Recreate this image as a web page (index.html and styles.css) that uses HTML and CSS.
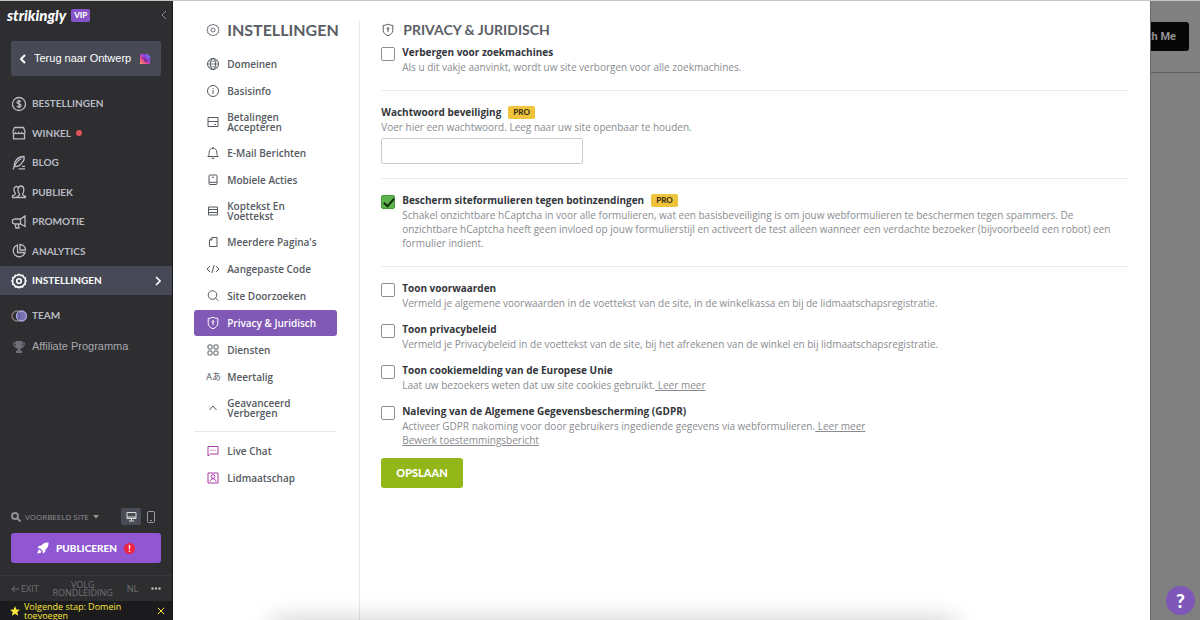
FILE: index.html
```html
<!DOCTYPE html>
<html lang="nl">
<head>
<meta charset="utf-8">
<title>Privacy &amp; Juridisch – Instellingen</title>
<link rel="stylesheet" href="styles.css">
</head>
<body>
<aside class="sidebar">
  <header class="brand">
    <span class="brand-name">strikingly</span><span class="vip">VIP</span>
    <button class="collapse" aria-label="Inklappen"><svg width="6" height="10" viewBox="0 0 6 10"><path d="M5 1 1 5l4 4"/></svg></button>
  </header>
  <a class="back" href="#"><svg class="thick" width="6" height="10" viewBox="0 0 6 10"><path d="M5 1 1 5l4 4"/></svg><span>Terug naar Ontwerp</span>
    <svg class="plain" width="12" height="12" viewBox="0 0 12 12"><defs><linearGradient id="g" x1="0" y1="1" x2="1" y2="0"><stop offset="0" stop-color="#f5a04e"/><stop offset=".35" stop-color="#e2449c"/><stop offset=".65" stop-color="#8a43dc"/><stop offset="1" stop-color="#3f57e8"/></linearGradient></defs><path fill="url(#g)" d="M1 1h6l4 4v6H1z"/><path fill="#7c6bf0" d="M7.500 0v4.500H12z"/><path fill="#4b2a82" d="M3 4h2l4 4v1H6z" opacity=".6"/></svg>
  </a>
  <ul class="menu">
    <li><a href="#"><svg width="16" height="16" viewBox="0 0 16 16"><circle cx="8" cy="8" r="6.500"/><path d="M10 6c-.3-.8-1-1.100-2-1.100-1.200 0-2 .5-2 1.500C6 8.500 10 7.300 10 9.500c0 1-.8 1.600-2 1.600s-1.900-.5-2.100-1.300M8 3.700v8.600"/></svg>BESTELLINGEN</a></li>
    <li><a href="#"><svg width="16" height="16" viewBox="0 0 16 16"><path d="M3.500 2.500h9l1.500 4v1.200c-1 1.300-2.500 1.300-3.300 0-.8 1.300-2.500 1.300-3 0-.9 1.300-2.500 1.300-3 0C4 9 2.500 9 2 7.700V6.500zM2.500 9v4.800h11V9"/></svg>WINKEL<i class="dot"></i></a></li>
    <li><a href="#"><svg width="16" height="16" viewBox="0 0 16 16"><path d="M2 14.500C4.500 8 7 5 10.500 3.500M3 11.500C3 6 6.500 1.500 13 1.500c.5 3-.6 5-2.200 6.200-1 2.500-3.500 3.800-7.300 3.800M7.500 13.800H14M11 11.300h3"/></svg>BLOG</a></li>
    <li><a href="#"><svg width="16" height="16" viewBox="0 0 16 16"><path d="M6.500 13.500v-1.200c2-.8 2.200-1 2.200-2C6 7.500 6.500 2 10 2s3.500 5.500 1.500 8.200c0 1 .3 1.300 3 2.100v1.200zM7 3C5 1.800 2.500 3 3 6.300c.1 1.500.7 2.500 1.500 3.200 0 1.200-.5 1.300-3 2.200v1.800h5"/></svg>PUBLIEK</a></li>
    <li><a href="#"><svg width="16" height="16" viewBox="0 0 16 16"><path d="M14 2v10.500L9.500 10H4L1.500 9V6L4 5h5.500zM9.500 5v5M4 10l1 4h3l-.6-4"/></svg>PROMOTIE</a></li>
    <li><a href="#"><svg width="16" height="16" viewBox="0 0 16 16"><path d="M6.500 2A6 6 0 1 0 14 9.500H6.500z"/><path d="M9 1.500V7h5.500A5.500 5.500 0 0 0 9 1.500z"/></svg>ANALYTICS</a></li>
    <li class="active"><a href="#"><svg width="16" height="16" viewBox="0 0 16 16"><use href="#gear"/></svg>INSTELLINGEN<svg class="arrow" width="6" height="10" viewBox="0 0 6 10"><path d="m1 1 4 4-4 4"/></svg></a></li>
  </ul>
  <ul class="menu extra">
    <li><a href="#"><svg width="16" height="12" viewBox="0 0 16 12"><circle cx="6" cy="6" r="5" stroke="#8b7b76"/><circle cx="10.500" cy="6" r="5" fill="#7773b2" stroke="#aaa6d8"/><path d="M7 2.500a5 5 0 0 1 0 7" stroke="#56519a"/></svg>TEAM</a></li>
    <li><a class="affiliate" href="#"><svg width="16" height="16" viewBox="0 0 16 16"><path fill="#6d6e76" stroke="none" d="M4.500 2h7v1.500H14C14 7 12.500 8.500 10.500 9 9.800 10 9 10.400 9 11.500h2V14H5v-2.500h2C7 10.400 6.200 10 5.500 9 3.500 8.500 2 7 2 3.500h2.500zm-1.300 2.500c.2 1.500.7 2.300 1.600 2.800l-.3-2.800zm8.300 0-.3 2.800c.9-.5 1.400-1.300 1.600-2.800z"/></svg>Affiliate Programma</a></li>
  </ul>
  <div class="bottom">
    <div class="site-row">
      <button class="site"><svg class="search" width="10" height="10" viewBox="0 0 10 10"><circle cx="4" cy="4" r="3"/><path d="m6 6 3.500 3.500"/></svg>VOORBEELD SITE<svg class="plain" width="6" height="4" viewBox="0 0 6 4"><path fill="#999" d="M0 0h6L3 3.500z"/></svg></button>
      <button class="device on" aria-label="Desktop"><svg width="11" height="11" viewBox="0 0 11 11"><path d="M1 1.500h9v6H1zM1 6h9M5.500 7.500v2M3 10h5"/></svg></button>
      <button class="device" aria-label="Mobiel"><svg width="8" height="12" viewBox="0 0 8 12"><rect x=".5" y=".5" width="7" height="11" rx="1"/><path d="M3 9.500h2"/></svg></button>
    </div>
    <button class="publish"><svg class="plain" width="12" height="12" viewBox="0 0 12 12"><path fill="#fff" d="M11.500.5C8 .2 6 1.500 4.500 3.500L2 3.800.5 6.300l2.500-.1L5.800 9l-.1 2.500 2.500-1.500.3-2.500C10.500 6 11.800 4 11.500.5zM2.500 7.500C1 8 .8 9.500.5 11.500 2.500 11.200 4 11 4.500 9.500z"/></svg>PUBLICEREN<span class="alert">!</span></button>
    <div class="tools">
      <a href="#"><svg width="8" height="8" viewBox="0 0 8 8"><path d="M8 4H1M4 .8.800 4 4 7.200"/></svg>EXIT</a>
      <a class="tour" href="#">VOLG RONDLEIDING</a>
      <a href="#">NL</a>
      <button class="more" aria-label="Meer"><svg class="plain" width="10" height="3" viewBox="0 0 10 3"><g fill="#bbb"><circle cx="1.500" cy="1.500" r="1.200"/><circle cx="5" cy="1.500" r="1.200"/><circle cx="8.500" cy="1.500" r="1.200"/></g></svg></button>
    </div>
    <div class="next"><svg class="plain" width="10" height="10" viewBox="0 0 10 10"><path fill="#fce83a" d="m5 0 1.400 3.400 3.600.3-2.700 2.400.8 3.600L5 7.800 1.900 9.700l.8-3.600L0 3.700l3.600-.3z"/></svg><span>Volgende stap: Domein toevoegen</span><button aria-label="Sluiten"><svg width="8" height="8" viewBox="0 0 8 8"><path d="m.8.800 6.400 6.400m0-6.400L.8 7.200"/></svg></button></div>
  </div>
</aside>

<div class="panel">
  <nav class="settings">
    <h2><svg width="14" height="14" viewBox="0 0 16 16"><g id="gear"><path d="m8 1.300 1.700 1.200 2-.2.800 1.900 1.900.8-.2 2L15 8l-1 1.300.2 1.900-1.800.8-.8 1.800-2-.2L8 14.700l-1.600-1.100-2 .2-.8-1.800-1.800-.8.200-1.900L1 8l1-1.300-.2-2 1.800-.7.8-1.700 2 .2z"/><circle cx="8" cy="8" r="2.300"/></g></svg>INSTELLINGEN</h2>
    <ul>
      <li><a href="#"><svg width="14" height="14" viewBox="0 0 14 14"><circle cx="7" cy="7" r="5.500"/><ellipse cx="7" cy="7" rx="2.500" ry="5.500"/><path d="M1.500 7h11" stroke-width=".8"/><path d="M2.500 4.200h9M2.500 9.800h9" stroke-width=".6"/></svg><span>Domeinen</span></a></li>
      <li><a href="#"><svg width="14" height="14" viewBox="0 0 14 14"><circle cx="7" cy="7" r="5.500"/><path d="M7 6v4M7 4v1"/></svg><span>Basisinfo</span></a></li>
      <li><a href="#"><svg width="14" height="14" viewBox="0 0 14 14"><path d="M2 2.500h10v9H2zM2 6.500h10M8.500 9.500H10"/></svg><span>Betalingen Accepteren</span></a></li>
      <li><a href="#"><svg width="14" height="14" viewBox="0 0 14 14"><path d="M1.800 10.500h10.400C10.800 9.500 11 8 10.800 6 10.500 3.500 9 2.300 7 2.300S3.500 3.500 3.200 6C3 8 3.200 9.500 1.800 10.500zM5.500 12.300h3M7 1v1"/></svg><span>E-Mail Berichten</span></a></li>
      <li><a href="#"><svg width="14" height="14" viewBox="0 0 14 14"><rect x="3" y="2" width="8" height="9.500" rx="1"/><path d="M3 9.300h8M6 4.300h2"/></svg><span>Mobiele Acties</span></a></li>
      <li><a href="#"><svg width="14" height="14" viewBox="0 0 14 14"><path d="M2.500 3h9v8h-9zM2.500 5.500h9M2.500 8.500h9"/></svg><span>Koptekst En Voettekst</span></a></li>
      <li><a href="#"><svg width="14" height="14" viewBox="0 0 14 14"><path d="M6 2.500h5v9H3.500V5zM6 2.500V5H3.500"/></svg><span>Meerdere Pagina's</span></a></li>
      <li><a href="#"><svg width="14" height="14" viewBox="0 0 14 14"><path d="M4 4 1 7l3 3m6-6 3 3-3 3M8.200 3 5.800 11"/></svg><span>Aangepaste Code</span></a></li>
      <li><a href="#"><svg width="14" height="14" viewBox="0 0 14 14"><circle cx="6.500" cy="6" r="4.300"/><path d="m9.500 9 2.800 2.800"/></svg><span>Site Doorzoeken</span></a></li>
      <li class="active"><a href="#"><svg width="14" height="14" viewBox="0 0 14 14"><use href="#shield"/></svg><span>Privacy &amp; Juridisch</span></a></li>
      <li><a href="#"><svg width="14" height="14" viewBox="0 0 14 14"><rect x="2" y="2" width="4" height="4" rx=".8"/><rect x="8" y="2" width="4" height="4" rx=".8"/><rect x="2" y="8" width="4" height="4" rx=".8"/><rect x="8" y="8" width="4" height="4" rx=".8"/></svg><span>Diensten</span></a></li>
      <li><a href="#"><b class="lang">Aあ</b><span>Meertalig</span></a></li>
      <li><a href="#"><svg width="14" height="14" viewBox="0 0 14 14"><path d="m3.500 9 3.500-4 3.500 4"/></svg><span>Geavanceerd Verbergen</span></a></li>
    </ul>
    <ul class="addons">
      <li><a href="#"><svg width="14" height="14" viewBox="0 0 14 14"><path d="M2 2.500h10v7.500H4.500L2 12zM4.500 6.300h1m1 0h1m1 0h1"/></svg><span>Live Chat</span></a></li>
      <li><a href="#"><svg width="14" height="14" viewBox="0 0 14 14"><path d="M2 2h10v10H2z"/><circle cx="7" cy="5.500" r="1.900"/><path d="M4 10.500C4.300 8.500 5.500 7.800 7 7.800s2.700.7 3 2.700"/></svg><span>Lidmaatschap</span></a></li>
    </ul>
  </nav>
  <main class="content">
    <h1><svg width="14" height="14" viewBox="0 0 14 14"><g id="shield"><path d="M7 1.200c1.500.8 3 1.200 4.800 1.200v5c0 2.400-2 4.300-4.800 5.400-2.800-1.100-4.800-3-4.800-5.400v-5C4 2.400 5.500 2 7 1.200z"/><path d="M7 6v3.200"/><circle cx="7" cy="5.500" r=".9"/></g></svg>PRIVACY &amp; JURIDISCH</h1>
    <section>
      <div class="option"><input type="checkbox" id="hide"><div><label for="hide">Verbergen voor zoekmachines</label><p>Als u dit vakje aanvinkt, wordt uw site verborgen voor alle zoekmachines.</p></div></div>
    </section>
    <section class="password">
      <label for="pw">Wachtwoord beveiliging</label><span class="pro">PRO</span>
      <p>Voer hier een wachtwoord. Leeg naar uw site openbaar te houden.</p>
      <input type="text" id="pw">
    </section>
    <section>
      <div class="option"><input type="checkbox" id="bot" checked><div><label for="bot">Bescherm siteformulieren tegen botinzendingen</label><span class="pro">PRO</span><p>Schakel onzichtbare hCaptcha in voor alle formulieren, wat een basisbeveiliging is om jouw webformulieren te beschermen tegen spammers. De onzichtbare hCaptcha heeft geen invloed op jouw formulierstijl en activeert de test alleen wanneer een verdachte bezoeker (bijvoorbeeld een robot) een formulier indient.</p></div></div>
    </section>
    <section>
      <div class="option"><input type="checkbox" id="terms"><div><label for="terms">Toon voorwaarden</label><p>Vermeld je algemene voorwaarden in de voettekst van de site, in de winkelkassa en bij de lidmaatschapsregistratie.</p></div></div>
      <div class="option"><input type="checkbox" id="privacy"><div><label for="privacy">Toon privacybeleid</label><p>Vermeld je Privacybeleid in de voettekst van de site, bij het afrekenen van de winkel en bij lidmaatschapsregistratie.</p></div></div>
      <div class="option"><input type="checkbox" id="cookie"><div><label for="cookie">Toon cookiemelding van de Europese Unie</label><p>Laat uw bezoekers weten dat uw site cookies gebruikt.<a href="#"> Leer meer</a></p></div></div>
      <div class="option"><input type="checkbox" id="gdpr"><div><label for="gdpr">Naleving van de Algemene Gegevensbescherming (GDPR)</label><p>Activeer GDPR nakoming voor door gebruikers ingediende gegevens via webformulieren.<a href="#"> Leer meer</a><br><a href="#">Bewerk toestemmingsbericht</a></p></div></div>
    </section>
    <button class="save">OPSLAAN</button>
  </main>
  <div class="glow"></div>
</div>
<div class="backdrop">
  <div class="site-head"><button>th Me</button></div>
  <button class="help" aria-label="Help">?</button>
</div>
</body>
</html>
```

FILE: styles.css
```css
* { box-sizing: border-box; }
body {
  margin: 0;
  display: flex;
  height: 100vh;
  overflow: hidden;
  border-top: 1px solid #c3c5c3;
  font: 10px/15px "Open Sans", sans-serif;
  color: #4b4f56;
  background: #fff;
}
h1, h2, p, ul { margin: 0; padding: 0; }
ul { list-style: none; }
a { color: inherit; text-decoration: none; }
button { border: 0; padding: 0; background: none; color: inherit; font: inherit; }
svg { flex: none; fill: none; stroke: currentColor; stroke-width: 1; display: block; }
svg.plain { stroke: none; }

.sidebar {
  flex: 0 0 173px;
  display: flex;
  flex-direction: column;
  background: #2e2e31;
  border-right: 1px solid #1b1b1d;
  color: #b9bbc4;
}
.brand { display: flex; align-items: center; height: 28px; padding: 0 5px 0 7px; }
.brand-name { font: italic 900 15px/20px Lato, sans-serif; color: #fff; }
.vip { margin-left: 5px; padding: 0 3px; border-radius: 2px; background: #8654c8; color: #fff; font: 900 8px/13px Lato, sans-serif; }
.collapse { margin-left: auto; color: #8b8b90; }
.back {
  display: flex;
  align-items: center;
  gap: 8px;
  height: 35px;
  margin: 12px 11px 13px;
  padding: 0 10px 0 9px;
  border-radius: 2px;
  background: #474a54;
  color: #fff;
  font: 11px/15px "Liberation Sans", Arial, sans-serif;
  white-space: nowrap;
}
.back .plain { margin-left: auto; }
.thick { stroke-width: 2; }
.menu { display: flex; flex-direction: column; justify-content: space-between; min-height: 206px; font: bold 10px/15px Lato, sans-serif; }
.menu a { display: flex; align-items: center; gap: 5px; height: 29px; padding: 0 11px; }
.menu svg { stroke-width: 1.3; }
.menu .active { background: #474a56; color: #fff; }
.menu .active svg { stroke-width: 1.6; }
.menu .arrow { margin-left: auto; }
.dot { width: 6px; height: 6px; border-radius: 50%; background: #e0555c; }
.extra { min-height: 60px; margin-top: 6px; }
.extra .affiliate { font: 11px/15px "Liberation Sans", Arial, sans-serif; color: #a6a8ae; }
.bottom { margin-top: auto; font: 9px/12px "Open Sans", sans-serif; color: #717177; }
.site-row { display: flex; align-items: center; padding: 0 11px; margin-bottom: 8px; }
.site { display: flex; align-items: center; gap: 4px; margin-right: auto; color: #8e8f95; font-size: 8px; }
.search { stroke-width: 2; }
.device { display: flex; align-items: center; justify-content: center; width: 20px; height: 17px; border-radius: 2px; color: #9b9ba0; }
.on { background: #4a4c55; color: #ddd; }
.publish {
  display: flex;
  align-items: center;
  justify-content: center;
  gap: 7px;
  width: 150px;
  height: 30px;
  margin: 0 11px 12px;
  border-radius: 3px;
  background: #9157d3;
  color: #fff;
  font: 900 10px/15px Lato, sans-serif;
}
.alert { width: 11px; border-radius: 50%; background: #f0243f; font-size: 9px; line-height: 11px; text-align: center; }
.tools { display: flex; align-items: center; justify-content: space-between; height: 26px; padding: 0 11px; border-top: 1px solid #38383b; line-height: 8px; }
.tools a { display: flex; align-items: center; gap: 2px; }
.tools .tour { width: 62px; text-align: center; display: block; }
.next { display: flex; align-items: center; gap: 4px; height: 19px; padding: 0 7px 0 10px; background: #1b1b1d; color: #fce83a; line-height: 9px; }
.next span { flex: 1; }

.panel { position: relative; flex: 1; display: flex; overflow: hidden; background: #fff; }
.settings { flex: 0 0 187px; min-width: 0; display: flex; flex-direction: column; margin-top: 20px; padding: 0 22px 0 21px; border-right: 1px solid #e9e9e9; font-weight: 600; line-height: 10px; color: #555a61; }
h1, h2 { display: flex; align-items: center; font: bold 14px/18px Lato, sans-serif; color: #5a5e65; }
h2 { gap: 7px; padding-left: 12px; margin-bottom: 12px; font-size: 16px; }
.settings ul { display: flex; flex-direction: column; gap: 1px; }
.settings li a { display: flex; align-items: center; gap: 7px; min-height: 26px; padding: 7px 8px 7px 12px; border-radius: 3px; }
.settings .active a { background: #8058b5; color: #fff; }
.settings .lang { width: 14px; font: 9px/10px "Noto Sans", "Noto Sans CJK JP", sans-serif; white-space: nowrap; }
.settings svg { margin: -2px 0; }
.settings .addons { margin-top: 6px; padding-top: 6px; border-top: 1px solid #e9e9e9; }
.addons svg { color: #a93aa8; }

.content { flex: 1; padding: 20px 21px 0; line-height: 14px; color: #8a8c90; }
h1 { gap: 8px; margin-bottom: 6px; }
section + section { margin-top: 16px; padding-top: 14px; border-top: 1px solid #ececec; }
.password + section { margin-top: 14px; }
.option { display: flex; gap: 7px; }
.option + .option { margin-top: 12px; }
label { color: #33363b; font-weight: bold; line-height: 15px; }
.option a { text-decoration: underline; }
input[type="checkbox"] { appearance: none; flex: none; width: 14px; height: 14px; margin: 2px 0 0; border: 1px solid #8d8f94; border-radius: 2px; background: #fff; }
input[type="checkbox"]:checked { position: relative; background: #5cb34d; border-color: #4c9a40; }
input[type="checkbox"]:checked::after { content: ""; position: absolute; left: 4px; top: 0; width: 4px; height: 9px; border: solid #14300f; border-width: 0 2px 2px 0; transform: rotate(42deg); }
.pro { display: inline-block; margin: 1px 0 0 7px; padding: 0 5px; border-radius: 2px; background: #f0c33c; color: #3d3417; font: 900 8px/13px Lato, sans-serif; vertical-align: top; }
input[type="text"] { display: block; width: 202px; height: 26px; margin-top: 4px; border: 1px solid #ccc; border-radius: 2px; background: #fff; }
.save { margin-top: 11px; padding: 0 15px; border-radius: 3px; background: #93b719; color: #fff; font: 900 11px/30px Lato, sans-serif; }
.glow { position: absolute; left: 10%; right: 20%; bottom: -20px; height: 20px; box-shadow: 0 0 24px rgba(0, 0, 0, .22); }

.backdrop { flex: 0 0 50px; display: flex; flex-direction: column; background: #808080; border-left: 1px solid #6c6c6c; }
.site-head { padding: 21px 11px 21px 0; border-bottom: 1px solid #606060; }
.site-head button { display: flex; align-items: center; justify-content: flex-end; width: 38px; height: 29px; padding-right: 13px; overflow: hidden; white-space: nowrap; border-radius: 0 3px 3px 0; background: #060606; color: #929292; font: bold 11px/15px Roboto, sans-serif; }
.help { width: 29px; height: 29px; margin: auto 5px 5px auto; border-radius: 50%; background: #7e57b8; color: #fff; font: 900 19px/29px Lato, sans-serif; }
```
